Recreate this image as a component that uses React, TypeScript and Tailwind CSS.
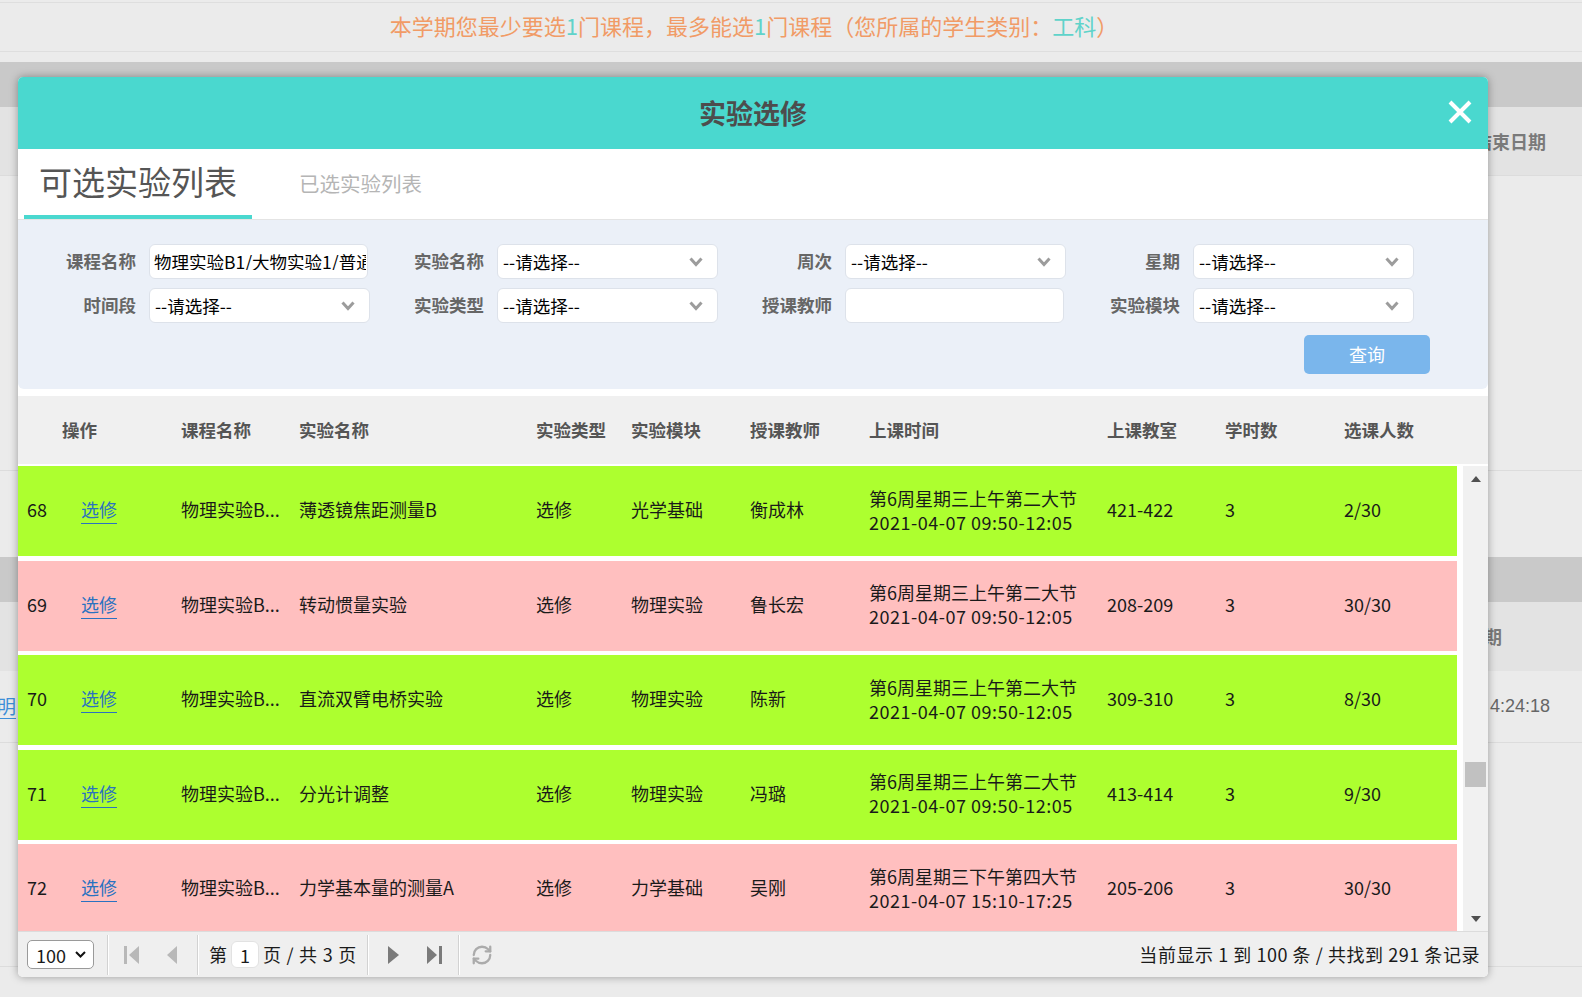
import { RefreshCw } from 'lucide-react';

type Row = {
  no: number;
  name: string;
  type: string;
  module: string;
  teacher: string;
  slot: string;
  time: string;
  room: string;
  hours: string;
  count: string;
  full: boolean;
};

const rows: Row[] = [
  { no: 68, name: '薄透镜焦距测量B', type: '选修', module: '光学基础', teacher: '衡成林', slot: '第6周星期三上午第二大节', time: '2021-04-07 09:50-12:05', room: '421-422', hours: '3', count: '2/30', full: false },
  { no: 69, name: '转动惯量实验', type: '选修', module: '物理实验', teacher: '鲁长宏', slot: '第6周星期三上午第二大节', time: '2021-04-07 09:50-12:05', room: '208-209', hours: '3', count: '30/30', full: true },
  { no: 70, name: '直流双臂电桥实验', type: '选修', module: '物理实验', teacher: '陈新', slot: '第6周星期三上午第二大节', time: '2021-04-07 09:50-12:05', room: '309-310', hours: '3', count: '8/30', full: false },
  { no: 71, name: '分光计调整', type: '选修', module: '物理实验', teacher: '冯璐', slot: '第6周星期三上午第二大节', time: '2021-04-07 09:50-12:05', room: '413-414', hours: '3', count: '9/30', full: false },
  { no: 72, name: '力学基本量的测量A', type: '选修', module: '力学基础', teacher: '吴刚', slot: '第6周星期三下午第四大节', time: '2021-04-07 15:10-17:25', room: '205-206', hours: '3', count: '30/30', full: true },
];

const headers = ['操作', '课程名称', '实验名称', '实验类型', '实验模块', '授课教师', '上课时间', '上课教室', '学时数', '选课人数'];

function Chevron() {
  return (
    <svg width="14" height="10" viewBox="0 0 14 10" className="shrink-0">
      <polyline points="1.5,1.5 7,7.5 12.5,1.5" fill="none" stroke="#9c9c9c" strokeWidth="3" />
    </svg>
  );
}

function SelectBox({ value }: { value: string }) {
  return (
    <div className="flex h-[35px] w-[221px] items-center justify-between rounded-[6px] border border-[#dde2ea] bg-white pl-[5px] pr-[14px] text-[17.5px] leading-none text-black">
      <span>{value}</span>
      <Chevron />
    </div>
  );
}

function TextBox({ value }: { value?: string }) {
  return (
    <div className="flex h-[35px] w-[219px] items-center overflow-hidden whitespace-nowrap rounded-[6px] border border-[#dde2ea] bg-white pl-[4px] text-[17.5px] leading-none text-black">
      <span className="w-[212px] shrink-0 overflow-hidden">{value}</span>
    </div>
  );
}

function Field({ label, children }: { label: string; children: React.ReactNode }) {
  return (
    <div className="flex w-[348px] items-center">
      <span className="w-[114px] text-right text-[17.5px] font-bold text-[#666]">{label}</span>
      <div className="ml-[13px]">{children}</div>
    </div>
  );
}

function Sep() {
  return <div className="h-[40px] w-[2px] border-l border-r border-l-[#d2d2d2] border-r-white" />;
}

export default function App() {
  return (
    <div className="relative h-[997px] w-[1582px] overflow-hidden bg-[#ebebeb] font-['Noto_Sans_CJK_SC','Noto_Sans',sans-serif]">
      {/* page behind the dialog */}
      <div className="mt-[2px] flex h-[50px] items-center justify-center border-y border-[#dedede] pb-[3px] pr-[74px] text-[22px] text-[#f19b66]">
        本学期您最少要选<span className="text-[#5fd3ca]">1</span>门课程，最多能选<span className="text-[#5fd3ca]">1</span>门课程（您所属的学生类别：<span className="text-[#5fd3ca]">工科</span>）
      </div>
      <div className="mt-[10px] h-[45px] bg-[#c9c9c9]" />
      <div className="flex h-[69px] items-center justify-end border-b border-[#dcdcdc] bg-[#e3e3e3] pr-[36px] text-[18px] font-bold text-[#7a7a7a]">
        结束日期
      </div>
      <div className="h-[295px] border-b border-[#dcdcdc]" />
      <div className="h-[86px]" />
      <div className="h-[45px] bg-[#c9c9c9]" />
      <div className="flex h-[69px] items-center justify-end bg-[#e3e3e3] pr-[80px] text-[18px] font-bold text-[#7a7a7a]">
        日期
      </div>
      <div className="flex h-[72px] items-center justify-between border-b border-[#dcdcdc] pr-[32px]">
        <span className="-ml-[3px] text-[19px] text-[#3d8fd8] underline underline-offset-[4px]">明</span>
        <span className="font-['Liberation_Sans',sans-serif] text-[18px] text-[#666]">4:24:18</span>
      </div>
      <div className="h-[224px] border-b border-[#dcdcdc]" />

      {/* dialog */}
      <div className="absolute left-[18px] top-[77px] flex h-[900px] w-[1470px] flex-col overflow-hidden rounded-[5px] bg-white shadow-[0_0_9px_rgba(0,0,0,0.35)]">
        <div className="relative flex h-[72px] shrink-0 items-center justify-center bg-[#4ad8cf]">
          <span className="text-[27px] font-bold text-[#4d4d4d]">实验选修</span>
          <svg width="24" height="24" viewBox="0 0 24 24" className="absolute right-[16px] top-[23px]">
            <path d="M2 2 L22 22 M22 2 L2 22" stroke="white" strokeWidth="4" />
          </svg>
        </div>

        <div className="flex h-[71px] shrink-0 items-stretch border-b border-[#e4e4e4]">
          <div className="ml-[6px] flex w-[228px] items-center justify-center border-b-4 border-[#4ad8cf] text-[33px] text-[#555]">
            可选实验列表
          </div>
          <div className="ml-[47px] flex items-center pb-[2px] text-[20.5px] text-[#b5b5b5]">已选实验列表</div>
        </div>

        <div className="shrink-0 rounded-b-[6px] bg-[#ebf0f8] pb-[15px] pl-[4px] pt-[24px]">
          <div className="flex">
            <Field label="课程名称"><TextBox value="物理实验B1/大物实验1/普通物理实验" /></Field>
            <Field label="实验名称"><SelectBox value="--请选择--" /></Field>
            <Field label="周次"><SelectBox value="--请选择--" /></Field>
            <Field label="星期"><SelectBox value="--请选择--" /></Field>
          </div>
          <div className="mt-[9px] flex">
            <Field label="时间段"><SelectBox value="--请选择--" /></Field>
            <Field label="实验类型"><SelectBox value="--请选择--" /></Field>
            <Field label="授课教师"><TextBox /></Field>
            <Field label="实验模块"><SelectBox value="--请选择--" /></Field>
          </div>
          <div className="mt-[12px] flex justify-end pr-[58px]">
            <button className="h-[39px] w-[126px] rounded-[5px] bg-[#7ab6ec] text-[18px] text-white">查询</button>
          </div>
        </div>

        <div className="mt-[7px] grid h-[68px] shrink-0 grid-cols-[119px_118px_237px_95px_119px_119px_238px_118px_119px_1fr] items-center bg-[#f0f0f0] pl-[44px] text-[17.5px] font-bold text-[#555]">
          {headers.map((h) => (
            <span key={h}>{h}</span>
          ))}
        </div>

        <div className="flex min-h-0 flex-1 pt-[2px]">
          <div className="flex w-[1439px] flex-col gap-[4.5px] overflow-hidden">
            {rows.map((r) => (
              <div
                key={r.no}
                className={`grid h-[90px] shrink-0 grid-cols-[54px_100px_118px_237px_95px_119px_119px_238px_118px_119px_1fr] items-center pb-[3px] pl-[9px] text-[18px] text-[#1a1a1a] ${
                  r.full ? 'bg-[#ffbfbf]' : 'bg-[#adff2f]'
                }`}
              >
                <span>{r.no}</span>
                <span>
                  <span className="text-[#2a72c0] underline underline-offset-[6px]">选修</span>
                </span>
                <span>物理实验B...</span>
                <span>{r.name}</span>
                <span>{r.type}</span>
                <span>{r.module}</span>
                <span>{r.teacher}</span>
                <span className="flex flex-col leading-[24px]">
                  <span>{r.slot}</span>
                  <span className="tracking-[0.5px]">{r.time}</span>
                </span>
                <span>{r.room}</span>
                <span>{r.hours}</span>
                <span>{r.count}</span>
              </div>
            ))}
          </div>
          {/* scrollbar */}
          <div className="ml-[6px] flex w-[25px] flex-col items-center bg-[#f1f1f1] pb-[9px] pt-[10px]">
            <svg width="10" height="6" viewBox="0 0 10 6">
              <polygon points="5,0 10,6 0,6" fill="#505050" />
            </svg>
            <div className="mt-[280px] h-[25px] w-[21px] bg-[#c1c1c1]" />
            <div className="flex-1" />
            <svg width="10" height="6" viewBox="0 0 10 6">
              <polygon points="0,0 10,0 5,6" fill="#505050" />
            </svg>
          </div>
        </div>

        {/* pager */}
        <div className="flex h-[46px] shrink-0 items-center border-t border-[#dcdcdc] bg-[#efefef] pl-[9px] pr-[8px] text-[18px] text-[#1a1a1a]">
          <div className="flex h-[29px] w-[67px] items-center justify-between rounded-[5px] border border-[#9a9a9a] bg-white pl-[8px] pr-[7px] leading-none">
            <span>100</span>
            <svg width="11" height="7" viewBox="0 0 11 7">
              <polyline points="1,1 5.5,5.5 10,1" fill="none" stroke="#111" strokeWidth="2" />
            </svg>
          </div>
          <div className="ml-[13px]"><Sep /></div>
          <svg width="15" height="18" viewBox="0 0 15 18" className="ml-[15px]">
            <rect x="0" y="0" width="3" height="18" fill="#b8b8b8" />
            <polygon points="15,0 15,18 5,9" fill="#b8b8b8" />
          </svg>
          <svg width="10" height="18" viewBox="0 0 10 18" className="ml-[28px]">
            <polygon points="10,0 10,18 0,9" fill="#b8b8b8" />
          </svg>
          <div className="ml-[20px]"><Sep /></div>
          <span className="ml-[10px]">第</span>
          <div className="ml-[4px] flex h-[27px] w-[28px] items-center justify-center rounded-[6px] border border-[#e2e2e2] bg-white leading-none">1</div>
          <span className="ml-[4px] whitespace-pre [word-spacing:1.5px]">页 / 共 3 页</span>
          <div className="ml-[11px]"><Sep /></div>
          <svg width="11" height="18" viewBox="0 0 11 18" className="ml-[19px]">
            <polygon points="0,0 0,18 11,9" fill="#7a7a7a" />
          </svg>
          <svg width="15" height="18" viewBox="0 0 15 18" className="ml-[28px]">
            <polygon points="0,0 0,18 10,9" fill="#7a7a7a" />
            <rect x="12" y="0" width="3" height="18" fill="#7a7a7a" />
          </svg>
          <div className="ml-[16px]"><Sep /></div>
          <RefreshCw className="ml-[11px]" size={22} color="#ababab" strokeWidth={2.5} />
          <span className="flex-1 text-right tracking-[0.55px]">当前显示 1 到 100 条 / 共找到 291 条记录</span>
        </div>
      </div>
    </div>
  );
}
